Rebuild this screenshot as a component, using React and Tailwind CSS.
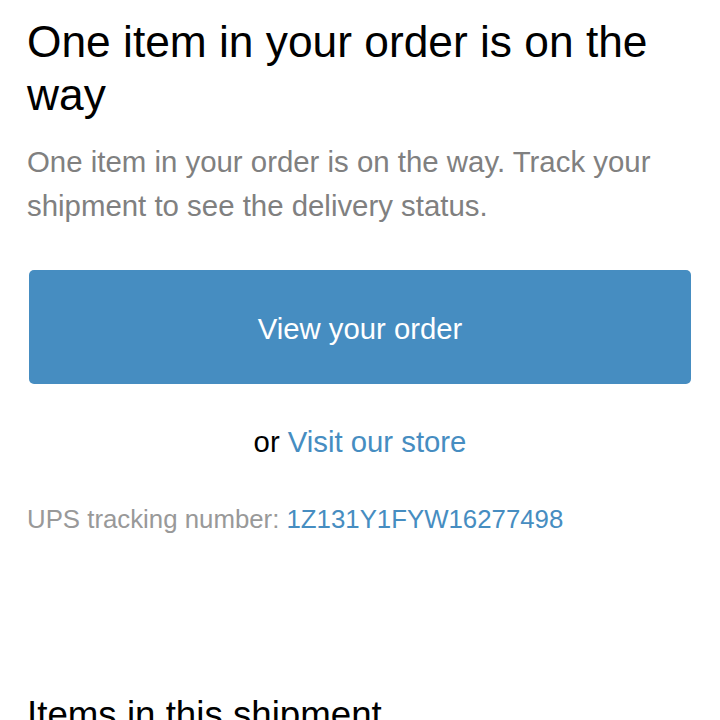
import React from 'react';

function App() {
    return (
        <div className="min-h-screen bg-white font-['Liberation_Sans',Arial,sans-serif] px-[27px] pt-[15px]">
            {/* Header */}
            <h1 className="text-[44.3px] leading-[53px] font-normal text-black">
                One item in your order is on the way
            </h1>
            <p className="mt-[19px] text-[29.4px] leading-[44px] text-[#808080] max-w-[660px]">
                One item in your order is on the way. Track your shipment to see the delivery status.
            </p>

            {/* Actions */}
            <a
                href="#"
                className="mt-[42px] ml-[2px] w-[662px] h-[114px] flex items-center justify-center rounded-[5px] bg-[#468dc1] text-white text-[29.3px] pt-[3px]"
            >
                View your order
            </a>
            <div className="mt-[36px] text-center text-[29.3px] leading-[44px] text-black">
                or <a href="#" className="text-[#468dc1]">Visit our store</a>
            </div>

            {/* Tracking */}
            <p className="mt-[35px] text-[25.8px] leading-[40px] text-[#999999]">
                UPS tracking number: <a href="#" className="text-[#468dc1]">1Z131Y1FYW16277498</a>
            </p>

            {/* Items */}
            <h2 className="mt-[154px] text-[36.7px] leading-[44px] font-normal text-black">
                Items in this shipment
            </h2>
        </div>
    );
}

export default App;
